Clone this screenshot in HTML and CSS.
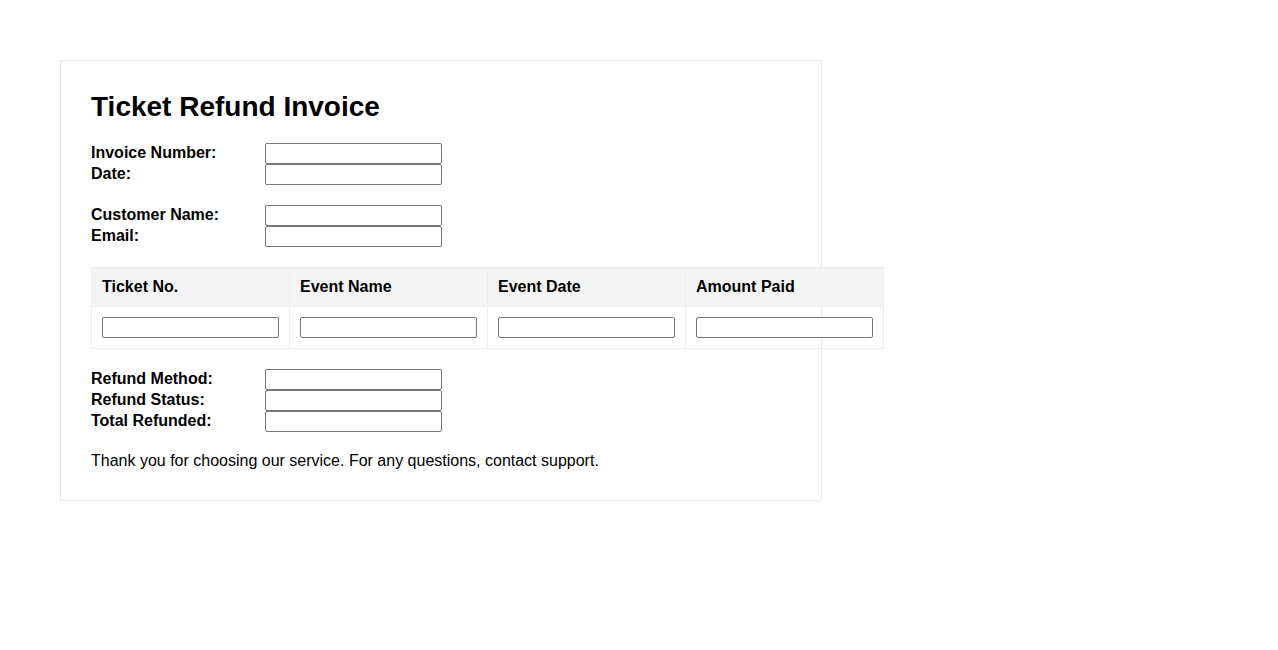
FILE: index.html
```html
<!DOCTYPE html>
<html lang="en">
<head>
<meta charset="utf-8">
<title>Ticket Refund Invoice</title>
<link rel="stylesheet" href="styles.css">
</head>
<body>
<div class="invoice">
  <h1 class="title">Ticket Refund Invoice</h1>

  <div class="fields">
    <label class="label">Invoice Number:</label><input class="field" type="text">
    <label class="label">Date:</label><input class="field" type="text">
  </div>

  <div class="fields">
    <label class="label">Customer Name:</label><input class="field" type="text">
    <label class="label">Email:</label><input class="field" type="text">
  </div>

  <table class="tickets">
    <thead>
      <tr>
        <th>Ticket No.</th>
        <th>Event Name</th>
        <th>Event Date</th>
        <th>Amount Paid</th>
      </tr>
    </thead>
    <tbody>
      <tr>
        <td><input class="field" type="text"></td>
        <td><input class="field" type="text"></td>
        <td><input class="field" type="text"></td>
        <td><input class="field" type="text"></td>
      </tr>
    </tbody>
  </table>

  <div class="fields">
    <label class="label">Refund Method:</label><input class="field" type="text">
    <label class="label">Refund Status:</label><input class="field" type="text">
    <label class="label">Total Refunded:</label><input class="field" type="text">
  </div>

  <p class="note">Thank you for choosing our service. For any questions, contact support.</p>
</div>
</body>
</html>
```

FILE: styles.css
```css
html, body {
  margin: 0;
  padding: 0;
  background: #ffffff;
}

body {
  font-family: "Liberation Sans", Arial, sans-serif;
  color: #000000;
  padding: 60px;
}

.invoice {
  width: 700px;
  padding: 30px;
  border: 1px solid #e8e8e8;
}

.title {
  margin: 0 0 20px 0;
  font-size: 28px;
  font-weight: bold;
  line-height: normal;
}

.fields {
  display: grid;
  grid-template-columns: 174px 177px;
  align-items: start;
  margin-bottom: 20px;
}

.label {
  padding-top: 1px;
  font-size: 16px;
  font-weight: bold;
  line-height: 18px;
}

.field {
  box-sizing: border-box;
  width: 177px;
  height: 21px;
  margin: 0;
  padding: 1px 2px;
  border: 1px solid #767676;
  border-radius: 2px;
  background: #ffffff;
  font-family: "Liberation Sans", Arial, sans-serif;
  font-size: 13px;
  display: block;
}

.tickets {
  border-collapse: collapse;
  margin-bottom: 20px;
}

.tickets th,
.tickets td {
  border: 1px solid #eeeeee;
  padding: 10px;
  text-align: left;
}

.tickets th {
  background: #f4f4f4;
  font-size: 16px;
  font-weight: bold;
  line-height: 18px;
}

.note {
  margin: 0;
  font-size: 16px;
  line-height: 18px;
}
```
